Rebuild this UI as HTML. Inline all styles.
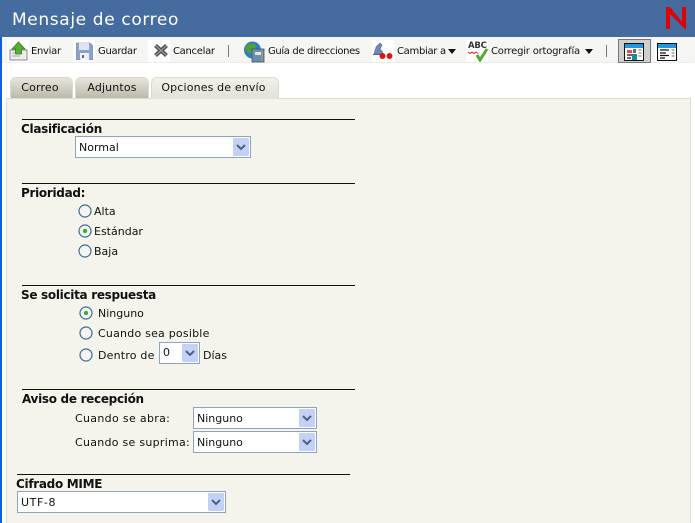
<!DOCTYPE html>
<html><head><meta charset="utf-8"><style>
html,body{margin:0;padding:0;background:#fff}
#p{position:relative;width:695px;height:523px;overflow:hidden;background:#fff;font-family:"DejaVu Sans","Liberation Sans",sans-serif;font-size:11px;color:#111}
#p div,#p span.a,#p svg{position:absolute}
.t{white-space:nowrap;line-height:14px}
.tb{font-size:10px;letter-spacing:-.3px;top:45px}
.b{font-weight:bold;font-size:12px;letter-spacing:-.3px}
.l{height:1px;background:#111}
.s{background:#fff;border:1px solid #8ea3bd;box-sizing:border-box;height:22px}
.s .v{left:3px;top:4px;white-space:nowrap;line-height:14px}
.s .g{right:1px;top:1px;width:16px;height:18px;background:#c3d1f5;border-radius:1px}
.ic{width:22px;height:22px;background:#fff;top:40px}
.tab{top:77px;height:21px;border:1px solid #dcdad0;border-bottom:0;border-radius:6px 6px 0 0;box-sizing:border-box;background:linear-gradient(#e7e5da,#bbb8ab);text-align:center;line-height:20px;white-space:nowrap;letter-spacing:.15px}
</style></head><body><div id="p">
<div style="left:0;top:0;width:695px;height:37px;background:#456c9f"></div>
<div class="t" style="left:12px;top:10px;font-size:17px;line-height:20px;color:#fff;letter-spacing:.63px">Mensaje de correo</div>
<svg style="left:666px;top:7px" width="21" height="23" viewBox="0 0 21 23"><path d="M0 0H4L16 15V0H20V23L4 7V22H0Z" fill="#e00000"/></svg>
<div style="left:0;top:37px;width:695px;height:26px;background:#f5f5f3"></div>
<div style="left:6px;top:62px;width:684px;height:1px;background:#ecebe5"></div>
<div style="left:0;top:37px;width:2px;height:486px;background:#0f5fe0"></div>

<div class="ic" style="left:7px"></div>
<svg style="left:9px;top:41px" width="20" height="20" viewBox="0 0 20 20"><rect x="1" y="9" width="17" height="10" fill="#eee" stroke="#888"/><path d="M3 12h6M3 15h8" stroke="#9ab"/><path d="M9.500 1L16 8H12.500V13H6.500V8H3Z" fill="#55b030" stroke="#3a7a20" stroke-width=".8"/></svg>
<div class="t tb" style="left:31px">Enviar</div>

<div class="ic" style="left:73px"></div>
<svg style="left:76px;top:42px" width="17" height="18" viewBox="0 0 17 18"><path d="M0 1H14L17 4V18H0Z" fill="#8da3c6" stroke="#6d82a8" stroke-width=".6"/><rect x="3" y="1" width="10" height="7" fill="#dfe5f0"/><rect x="4" y="11" width="9" height="7" fill="#f0f0f4"/><rect x="6" y="13" width="2" height="3" fill="#667"/></svg>
<div class="t tb" style="left:98px">Guardar</div>

<div class="ic" style="left:148px"></div>
<svg style="left:154px;top:44px" width="14" height="13" viewBox="0 0 14 13"><path d="M1.500 1.500L12.500 11.500M12.500 1.500L1.500 11.500" stroke="#4a4a4a" stroke-width="4"/><path d="M1.500 1.500L12.500 11.500M12.500 1.500L1.500 11.500" stroke="#999" stroke-width="1.400"/></svg>
<div class="t tb" style="left:173px">Cancelar</div>
<div style="left:228px;top:45px;width:1px;height:12px;background:#777"></div>

<svg style="left:243px;top:41px" width="22" height="22" viewBox="0 0 22 22"><circle cx="9.500" cy="9" r="8.500" fill="#2f7fc0"/><path d="M3 5Q8 1 12 3L13 8L8 13L3 10Z" fill="#4fa030"/><rect x="9" y="8" width="12" height="13" fill="#6c8cae" stroke="#3c5575" stroke-width=".8"/><rect x="12" y="11" width="6" height="3" fill="#dde6ef"/><path d="M19 9v11" stroke="#d8a040" stroke-width="1.500" stroke-dasharray="1.500 1"/></svg>
<div class="t tb" style="left:268px;letter-spacing:-.36px">Guía de direcciones</div>

<div class="ic" style="left:372px"></div>
<svg style="left:373px;top:42px" width="22" height="20" viewBox="0 0 22 20"><path d="M1 12L3 5L7 1L9 3L7 7L9 9L10 12Z" fill="#7188b5" stroke="#4d6596" stroke-width=".6"/><path d="M0 12.500H9" stroke="#4d6596"/><circle cx="9.500" cy="14" r="3" fill="#d81818"/><circle cx="16.500" cy="14" r="3" fill="#d81818"/></svg>
<div class="t tb" style="left:397px">Cambiar a</div>
<svg style="left:448px;top:49px" width="8" height="5"><path d="M0 0H8L4 5Z" fill="#111"/></svg>

<div class="ic" style="left:466px"></div>
<div class="t" style="left:468px;top:41px;font-size:8.500px;font-weight:bold;line-height:10px;color:#333;letter-spacing:-.2px">ABC</div>
<svg style="left:467px;top:48px" width="22" height="14" viewBox="0 0 22 14"><path d="M1 4l2 1.500 2-1.500 2 1.500 2-1.500 2 1.500" fill="none" stroke="#d02020" stroke-width=".9"/><path d="M10 7L13 12L20 1" fill="none" stroke="#55aa30" stroke-width="3"/></svg>
<div class="t tb" style="left:491px;letter-spacing:-.2px">Corregir ortografía</div>
<svg style="left:585px;top:49px" width="8" height="5"><path d="M0 0H8L4 5Z" fill="#111"/></svg>
<div style="left:606px;top:45px;width:1px;height:12px;background:#777"></div>

<div style="left:618px;top:39px;width:33px;height:24px;box-sizing:border-box;background:#cfcfcf;border:1px solid #777"></div>
<svg style="left:624px;top:43px" width="20" height="18" viewBox="0 0 20 18"><rect x=".5" y=".5" width="19" height="17" fill="#fff" stroke="#111"/><rect x="1" y="1" width="18" height="4" fill="#2497e0"/><rect x="3" y="7" width="5" height="3" fill="#e05050"/><path d="M9 7h3M9 9h3M3 12h9M3 15h4" stroke="#111" stroke-width="1.200"/><rect x="8" y="11" width="5" height="6" fill="#1c8c98"/><path d="M14.500 7h3M14.500 10h3M14.500 13h3" stroke="#888" stroke-width="1.200"/></svg>
<div class="ic" style="left:655px"></div>
<svg style="left:657px;top:43px" width="20" height="18" viewBox="0 0 20 18"><rect x=".5" y=".5" width="19" height="17" fill="#fff" stroke="#111"/><rect x="1" y="1" width="18" height="4" fill="#2497e0"/><path d="M3 7h9M3 10h6M3 12.500h9M3 15h5" stroke="#111" stroke-width="1.200"/><path d="M14.500 7h3M14.500 10h3M14.500 13h3" stroke="#888" stroke-width="1.200"/></svg>

<div style="left:6px;top:98px;width:685px;height:425px;background:#f4f3ec;border:1px solid #dedcd0;border-bottom:0;box-sizing:border-box"></div>
<div class="tab" style="left:10px;width:63px;padding-right:3px">Correo</div>
<div class="tab" style="left:75px;width:74px">Adjuntos</div>
<div class="tab" style="left:151px;width:128px;height:22px;padding-right:3px;background:linear-gradient(#f2f1ea,#e2e0d8)">Opciones de envío</div>

<div class="l" style="left:22px;top:119px;width:333px"></div>
<div class="t b" style="left:21px;top:122px">Clasificación</div>
<div class="s" style="left:75px;top:136px;width:176px"><div class="v">Normal</div><div class="g"></div><svg style="right:4px;top:7px" width="10" height="7"><path d="M1 1L5 5L9 1" fill="none" stroke="#4d6185" stroke-width="2"/></svg></div>

<div class="l" style="left:22px;top:183px;width:333px"></div>
<div class="t b" style="left:21px;top:186px">Prioridad:</div>
<svg style="left:78px;top:204px" width="14" height="14"><circle cx="7" cy="7" r="6" fill="#f4f4f0" stroke="#3f6a94" stroke-width="1.200"/></svg>
<div class="t" style="left:94px;top:205px">Alta</div>
<svg style="left:78px;top:224px" width="14" height="14"><circle cx="7" cy="7" r="6" fill="#f4f4f0" stroke="#3f6a94" stroke-width="1.200"/><circle cx="7" cy="7" r="2.200" fill="#35b035"/></svg>
<div class="t" style="left:94px;top:225px">Estándar</div>
<svg style="left:78px;top:244px" width="14" height="14"><circle cx="7" cy="7" r="6" fill="#f4f4f0" stroke="#3f6a94" stroke-width="1.200"/></svg>
<div class="t" style="left:94px;top:245px">Baja</div>

<div class="l" style="left:22px;top:285px;width:333px"></div>
<div class="t b" style="left:21px;top:288px">Se solicita respuesta</div>
<svg style="left:79px;top:306px" width="14" height="14"><circle cx="7" cy="7" r="6" fill="#f4f4f0" stroke="#3f6a94" stroke-width="1.200"/><circle cx="7" cy="7" r="2.200" fill="#35b035"/></svg>
<div class="t" style="left:98px;top:307px">Ninguno</div>
<svg style="left:79px;top:326px" width="14" height="14"><circle cx="7" cy="7" r="6" fill="#f4f4f0" stroke="#3f6a94" stroke-width="1.200"/></svg>
<div class="t" style="left:98px;top:327px;letter-spacing:.22px">Cuando sea posible</div>
<svg style="left:79px;top:348px" width="14" height="14"><circle cx="7" cy="7" r="6" fill="#f4f4f0" stroke="#3f6a94" stroke-width="1.200"/></svg>
<div class="t" style="left:98px;top:349px;letter-spacing:.2px">Dentro de</div>
<div class="s" style="left:159px;top:342px;width:41px"><div class="v" style="top:3px">0</div><div class="g"></div><svg style="right:4px;top:7px" width="10" height="7"><path d="M1 1L5 5L9 1" fill="none" stroke="#4d6185" stroke-width="2"/></svg></div>
<div class="t" style="left:203px;top:349px">Días</div>

<div class="l" style="left:22px;top:389px;width:333px"></div>
<div class="t b" style="left:22px;top:392px">Aviso de recepción</div>
<div class="t" style="left:75px;top:412px;letter-spacing:.33px">Cuando se abra:</div>
<div class="s" style="left:193px;top:407px;width:124px"><div class="v">Ninguno</div><div class="g"></div><svg style="right:4px;top:7px" width="10" height="7"><path d="M1 1L5 5L9 1" fill="none" stroke="#4d6185" stroke-width="2"/></svg></div>
<div class="t" style="left:75px;top:436px;letter-spacing:.28px">Cuando se suprima:</div>
<div class="s" style="left:193px;top:431px;width:124px"><div class="v">Ninguno</div><div class="g"></div><svg style="right:4px;top:7px" width="10" height="7"><path d="M1 1L5 5L9 1" fill="none" stroke="#4d6185" stroke-width="2"/></svg></div>

<div class="l" style="left:17px;top:474px;width:333px"></div>
<div class="t b" style="left:16px;top:477px">Cifrado MIME</div>
<div class="s" style="left:17px;top:491px;width:209px"><div class="v" style="letter-spacing:.6px">UTF-8</div><div class="g"></div><svg style="right:4px;top:7px" width="10" height="7"><path d="M1 1L5 5L9 1" fill="none" stroke="#4d6185" stroke-width="2"/></svg></div>
</div></body></html>
